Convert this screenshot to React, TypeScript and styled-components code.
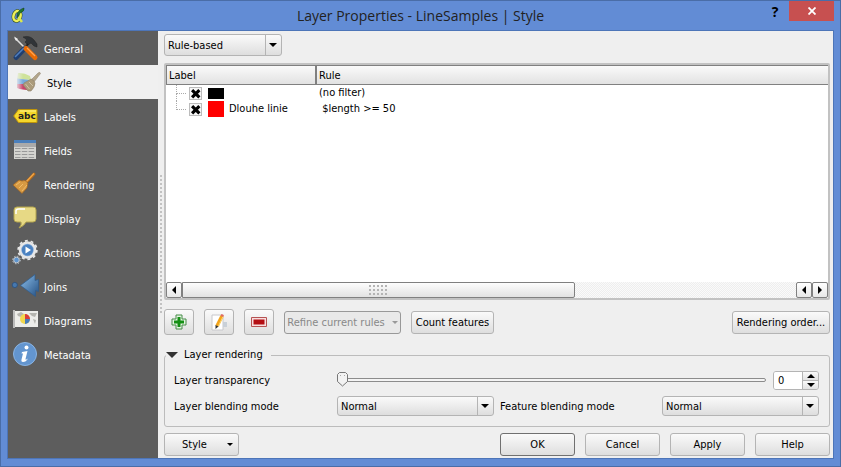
import React, { useState } from "react";
import styled, { createGlobalStyle, css } from "styled-components";

const svgUrl = (body: string, w: number, h: number) =>
  `url("data:image/svg+xml,${encodeURIComponent(
    `<svg xmlns='http://www.w3.org/2000/svg' width='${w}' height='${h}' viewBox='0 0 ${w} ${h}'>${body}</svg>`
  )}")`;

const arrowDown = svgUrl("<path d='M0 0H8L4 4Z' fill='#000'/>", 8, 4);
const thumbShape = svgUrl(
  "<path d='M2.5 .5H8.5L10.5 2.5V9.5L5.5 14L.5 9.5V2.5Z' fill='#f2f2f2' stroke='#777'/><path d='M3 3.5H4M7 3.5H8' stroke='#aaa'/>",
  11,
  15
);
const crossMark = svgUrl("<path d='M2.5 2.5L9.5 9.5M9.5 2.5L2.5 9.5' stroke='#000' stroke-width='3'/>", 12, 12);
const dotPattern = svgUrl("<path d='M0 0H2V2H0Z' fill='#c2c2c2'/>", 3, 4);
const gripPattern = svgUrl("<path d='M0 0H2V2H0Z' fill='#b4b4b4'/>", 4, 4);

const Global = createGlobalStyle`
  * { box-sizing: border-box; }
  body { margin: 0; background: #628cd5; }
  body, button, input, select { font-family: "DejaVu Sans Condensed", "DejaVu Sans", sans-serif; font-size: 11px; color: #000; }
  button, input, select { margin: 0; }
`;

const Window = styled.div`
  display: flex;
  flex-direction: column;
  min-height: 100vh;
  padding: 0 6px 7px;
  background: #628cd5;
  border: 1px solid #4a6da7;
`;

const TitleBar = styled.header`
  display: grid;
  grid-template-columns: 80px 1fr 80px;
  height: 29px;
  flex: none;
`;

const AppIcon = styled.div`
  padding: 6px 0 0 4px;
`;

const Title = styled.h1`
  margin: 0;
  text-align: center;
  color: #222;
  font: 14px/30px "Open Sans", sans-serif;
`;

const WindowControls = styled.div`
  display: flex;
  justify-content: flex-end;
`;

const HelpButton = styled.button`
  width: 28px;
  height: 20px;
  padding: 0;
  border: 0;
  background: none;
  font: bold 14px "Open Sans", sans-serif;
`;

const CloseButton = styled.button`
  width: 45px;
  height: 20px;
  display: grid;
  place-items: center;
  padding: 0;
  border: 0;
  background: #c75050;
`;

const Body = styled.div`
  display: flex;
  flex: 1;
  border: 1px solid #4d75b8;
  background: #efefef;
`;

const Sidebar = styled.nav`
  width: 150px;
  flex: none;
  background: #5d5d5d;
`;

const NavItem = styled.button<{ $active?: boolean }>`
  display: flex;
  align-items: center;
  gap: 6px;
  width: 100%;
  height: 34px;
  border: 0;
  padding: 0 0 0 ${(p) => (p.$active ? 7 : 4)}px;
  background: ${(p) => (p.$active ? "#f0f0f0" : "transparent")};
  color: ${(p) => (p.$active ? "#000" : "#fff")};
  text-align: left;
  svg { flex: none; }
  span { padding-top: 2px; }
`;

const Splitter = styled.div`
  width: 6px;
  flex: none;
  display: flex;
  align-items: center;
  padding-left: 2px;
  &::before {
    content: "";
    width: 3px;
    height: 140px;
    background: ${dotPattern};
  }
`;

const Main = styled.main`
  flex: 1;
  min-width: 0;
  display: flex;
  flex-direction: column;
  padding: 3px 3px 2px 0;
`;

const raised = css`
  border: 1px solid #b4b4b4;
  border-radius: 3px;
  background-color: #eee;
  background-image: linear-gradient(#fafafa, #dedede);
`;

const Select = styled.select<{ $width?: number }>`
  ${raised}
  appearance: none;
  width: ${(p) => (p.$width ? `${p.$width}px` : "100%")};
  height: ${(p) => (p.$width ? 22 : 20)}px;
  padding: 0 18px 0 3px;
  background-image: ${arrowDown}, linear-gradient(#b4b4b4, #b4b4b4), linear-gradient(#fafafa, #dedede);
  background-repeat: no-repeat;
  background-position: right 4px center, right 15px top, 0 0;
  background-size: 8px 4px, 1px 100%, 100% 100%;
`;

const Tree = styled.section`
  flex: 1;
  display: flex;
  flex-direction: column;
  margin-top: 7px;
  border: 2px solid #c2c2c2;
  border-radius: 2px;
  background: #fff;
`;

const Table = styled.table`
  width: 100%;
  border-collapse: separate;
  border-spacing: 0;
  table-layout: fixed;
  th {
    height: 20px;
    padding: 0 2px;
    text-align: left;
    font-weight: normal;
    border: solid #808080;
    border-width: 1px 0 1px 1px;
    background: linear-gradient(#fafafa, #e2e2e2);
  }
  th:first-child { width: 150px; border-right-width: 1px; }
  td { height: 16px; padding: 0 0 0 3px; white-space: pre; line-height: 16px; }
  td:first-child { padding: 0; }
`;

const RuleCell = styled.div`
  display: flex;
  align-items: center;
  height: 16px;
  padding-left: 10px;
`;

const Branch = styled.span<{ $last?: boolean }>`
  display: flex;
  flex-direction: column;
  width: 10px;
  height: 16px;
  margin-right: 3px;
  &::before {
    content: "";
    height: 8px;
    border: dotted #aaa;
    border-width: 0 0 1px 1px;
  }
  &::after {
    content: "";
    height: 8px;
    border-left: ${(p) => (p.$last ? 0 : 1)}px dotted #aaa;
  }
`;

const CheckBox = styled.input`
  appearance: none;
  width: 13px;
  height: 13px;
  border: 1px solid #bbb;
  background: #f6f6f6;
  &:checked { background: #f6f6f6 ${crossMark} center no-repeat; }
`;

const Swatch = styled.span<{ $color: string; $height: number }>`
  width: 16px;
  height: ${(p) => p.$height}px;
  margin: 0 5px 0 6px;
  background: ${(p) => p.$color};
`;

const ScrollBar = styled.div`
  display: flex;
  height: 16px;
  margin-top: auto;
  background: repeating-conic-gradient(#eee 0 25%, #fafafa 0 50%) 0 0 / 2px 2px;
`;

const ScrollArrow = styled.button`
  width: 16px;
  flex: none;
  display: grid;
  place-items: center;
  padding: 0;
  border: 1px solid #808080;
  border-radius: 2px;
  background: linear-gradient(#fff, #e8e8e8);
`;

const ScrollTrack = styled.div`
  flex: 1;
`;

const ScrollThumb = styled.div`
  display: grid;
  place-items: center;
  width: 64%;
  height: 16px;
  border: 1px solid #808080;
  border-radius: 0 2px 2px 0;
  background: linear-gradient(#fdfdfd, #e2e2e2);
  &::before {
    content: "";
    width: 18px;
    height: 10px;
    background: ${gripPattern};
  }
`;

const RuleTools = styled.div`
  display: flex;
  align-items: center;
  gap: 10px;
  height: 26px;
  margin-top: 9px;
`;

const Button = styled.button<{ $width: number; $primary?: boolean; $pushed?: boolean }>`
  ${raised}
  width: ${(p) => p.$width}px;
  height: 23px;
  padding: 0;
  white-space: nowrap;
  ${(p) => p.$primary && "border-color: #707070;"}
  ${(p) => p.$pushed && "margin-left: auto;"}
`;

const IconButton = styled(Button)`
  display: grid;
  place-items: center;
  height: 26px;
`;

const MenuButton = styled(Button)<{ $gap: number }>`
  display: flex;
  align-items: center;
  justify-content: center;
  gap: ${(p) => p.$gap}px;
  &:disabled { color: #888; border-color: #999; background: #e9e9e9; }
`;

const Group = styled.fieldset`
  min-width: 0;
  margin: 13px 0 6px;
  padding: 8px 10px 10px 9px;
  border: 1px solid #bcbcbc;
  border-radius: 3px;
`;

const Legend = styled.legend`
  display: flex;
  align-items: center;
  gap: 6px;
  margin-left: -8px;
  padding: 0 8px 0 0;
  line-height: 14px;
`;

const Form = styled.div`
  display: grid;
  grid-template-columns: 163px 1fr 168px 1fr;
  grid-template-rows: 20px 20px;
  row-gap: 6px;
  align-items: center;
`;

const Label = styled.label<{ $inset?: boolean }>`
  padding-left: ${(p) => (p.$inset ? 6 : 0)}px;
`;

const SliderRow = styled.div`
  grid-column: 2 / -1;
  display: flex;
  align-items: center;
  gap: 7px;
`;

const Slider = styled.input`
  appearance: none;
  flex: 1;
  min-width: 0;
  height: 15px;
  background: none;
  &::-webkit-slider-runnable-track {
    height: 4px;
    border: 1px solid #8c8c8c;
    border-radius: 2px;
    background: #f4f4f4;
  }
  &::-webkit-slider-thumb {
    appearance: none;
    width: 11px;
    height: 15px;
    margin: -7px 0 0 -1px;
    background: ${thumbShape};
  }
`;

const Spin = styled.div`
  display: flex;
  width: 46px;
  height: 19px;
  overflow: hidden;
  border: 1px solid #b4b4b4;
  border-radius: 3px;
  input {
    width: 28px;
    padding: 0 4px;
    border: 0;
    background: #fff;
  }
`;

const SpinArrows = styled.div`
  flex: 1;
  display: grid;
  border-left: 1px solid #b4b4b4;
  button {
    display: grid;
    place-items: center;
    padding: 0;
    border: 0;
    background: linear-gradient(#fafafa, #e2e2e2);
  }
  button + button { border-top: 1px solid #b4b4b4; }
`;

const DialogButtons = styled.footer`
  display: flex;
  gap: 10px;
  ${MenuButton} { margin-right: auto; padding-left: 12px; }
`;

const Triangle = ({ dir, w = 8, fill = "#000" }: { dir: "up" | "down" | "left" | "right"; w?: number; fill?: string }) => {
  const d = { up: "M0 4H8L4 0Z", down: "M0 0H8L4 4Z", left: "M4 0V8L0 4Z", right: "M0 0V8L4 4Z" }[dir];
  const flat = dir === "up" || dir === "down";
  return (
    <svg width={flat ? w : w / 2} height={flat ? w / 2 : w} viewBox={flat ? "0 0 8 4" : "0 0 4 8"} aria-hidden>
      <path d={d} fill={fill} />
    </svg>
  );
};

const icons: Record<string, React.ReactNode> = {
  General: (
    <>
      <path d="M2 2L13 13" stroke="#ddd" strokeWidth="1.6" />
      <path d="M1 .5L5 3L3 5Z" fill="#eee" />
      <path d="M10 1Q17-1 21 4L24 8V11L21 10L18 7L15 9L12 6L14 4Q12 2 10 1Z" fill="#303438" stroke="#222" strokeWidth=".5" />
      <path d="M15 8L11 13" stroke="#222" strokeWidth="2" />
      <path d="M11 13L3 21.500" stroke="#203f70" strokeWidth="5" strokeLinecap="round" />
      <path d="M10.500 12.500L2.500 20.500" stroke="#517fbd" strokeWidth="1.600" strokeLinecap="round" />
      <path d="M13 12.500L22 21.500" stroke="#e76b05" strokeWidth="5" strokeLinecap="round" />
      <path d="M14 12L22 20" stroke="#ffa34f" strokeWidth="1.300" />
    </>
  ),
  Style: (
    <>
      <defs>
        <linearGradient id="fade"><stop stopColor="#f0f0f0" stopOpacity=".9" /><stop offset=".5" stopColor="#f0f0f0" stopOpacity="0" /></linearGradient>
      </defs>
      <path d="M2 3Q8 2.500 14 6L15 10L1 9Z" fill="#cfe39a" />
      <path d="M1 8.500L14 10L11 15L1 14Z" fill="#77a9dc" />
      <path d="M1 14L10 14L14 20Q6 20 1 18Z" fill="#c9446d" />
      <path d="M0 1H14V21H0Z" fill="url(#fade)" />
      <path d="M22 3Q24 1.500 24.500 3.500L18 12L15.500 9.500Z" fill="#b2a58b" stroke="#8d806b" strokeWidth=".5" />
      <path d="M8 13Q12 11 15 9Q18 10 19 13Q19 17 15 21H12L7 15Z" fill="#ab9b7b" stroke="#8d806b" strokeWidth=".6" />
      <path d="M9.500 14L13.500 19M13 12L17 16" stroke="#cec2a8" />
    </>
  ),
  Labels: (
    <>
      <path d="M.7 12L5.500 5.500H24V18.500H5.500Z" fill="#f5d72c" stroke="#bf950a" />
      <path d="M7 7H23" stroke="#fff38a" />
      <text x="5" y="15" fontFamily="DejaVu Sans" fontSize="9" fontWeight="bold" fill="#222">abc</text>
    </>
  ),
  Fields: (
    <>
      <path d="M1 2H23V21H1Z" fill="#d4d4d0" />
      <path d="M1 2H23V5H1Z" fill="#4b80bd" />
      <path d="M1 5H23V9H1Z" fill="#aaa" />
      <path d="M2 10.500H22M2 13.500H22M2 16.500H22M2 19.500H22" stroke="#999" strokeDasharray="5.500 1.300" />
    </>
  ),
  Rendering: (
    <>
      <path d="M21 2L13.500 10" stroke="#b86b17" strokeWidth="2.800" strokeLinecap="round" />
      <path d="M21 1.500L13 10" stroke="#eea64b" strokeWidth="1.400" />
      <path d="M6 8L9 9Q12 7 15 11L14 16L9 21.500L0 13Z" fill="#d79a43" stroke="#9c601f" strokeWidth=".7" />
      <path d="M3 13L7 10M6 16L10 12M9 19L14 13" stroke="#f0bb69" />
    </>
  ),
  Display: (
    <>
      <path d="M4 1H20Q23 1 23 4V13Q23 16 20 16H13Q11 20 6 22Q9 19 8 16H4Q1 16 1 13V4Q1 1 4 1Z" fill="#e7d985" stroke="#b4a54f" />
      <path d="M3 8V5Q3 3 6 3H12" fill="none" stroke="#fff" strokeWidth="1.500" />
    </>
  ),
  Actions: (
    <>
      <circle cx="14.500" cy="10" r="7.500" fill="#82a9d8" stroke="#e7e7e7" strokeWidth="2.600" />
      <circle cx="14.500" cy="10" r="9.300" fill="none" stroke="#e7e7e7" strokeWidth="1.800" strokeDasharray="2.900 2.943" />
      <circle cx="14.500" cy="10" r="5.600" fill="#4b82c1" />
      <path d="M12.500 6.500L18 10L12.500 13.500Z" fill="#fff" />
      <circle cx="3.500" cy="20" r="2.800" fill="#5e95cf" stroke="#c2cbd4" strokeWidth="1" />
      <circle cx="3.500" cy="20" r="3.800" fill="none" stroke="#c2cbd4" strokeDasharray="1.500 1.480" />
    </>
  ),
  Joins: (
    <>
      <defs><linearGradient id="join" y2="1"><stop stopColor="#8fc1ec" /><stop offset="1" stopColor="#245083" /></linearGradient></defs>
      <circle cx="1.800" cy="11" r="2.600" fill="#4778ad" stroke="#274f80" strokeWidth=".8" />
      <path d="M7.500 11.500L22 .5V6.500L25.500 5.500V17.500L22.500 16.500V22.500Z" fill="url(#join)" stroke="#2c5b8f" strokeWidth=".7" />
    </>
  ),
  Diagrams: (
    <>
      <path d="M1 3H25V19H1Z" fill="#ededea" />
      <path d="M1 2V20" stroke="#bbb" strokeWidth="2" />
      <path d="M4 6L8 4L11 6L8 9L5 8ZM16 5L24 5L22 9L19 8ZM20 11L23 12L22 16Z" fill="#b5b5b0" />
      <circle cx="12" cy="11" r="5" fill="#f3d84c" />
      <path d="M12 11V6A5 5 0 0 1 17 11Z" fill="#d83c3c" />
      <path d="M12 11H17A5 5 0 0 1 12 16Z" fill="#477cba" />
    </>
  ),
  Metadata: (
    <>
      <circle cx="12" cy="12" r="11.500" fill="#6395cf" stroke="#8ab4e3" />
      <circle cx="13.500" cy="5.500" r="2" fill="#fff" />
      <path d="M9 10L14.500 9L12.500 17Q12.500 18.500 15 16.500Q13 20 10 20Q8 20 8.500 17.500L10 11.500H8.500Z" fill="#fff" />
    </>
  ),
};

const pages = ["General", "Style", "Labels", "Fields", "Rendering", "Display", "Actions", "Joins", "Diagrams", "Metadata"];

export default function App() {
  const [page, setPage] = useState("Style");
  const [transparency, setTransparency] = useState(0);
  const change = (n: number) => setTransparency(Math.max(0, Math.min(100, n || 0)));

  return (
    <>
      <Global />
      <Window>
        <TitleBar>
          <AppIcon>
            <svg width="16" height="18" viewBox="0 0 16 18" aria-hidden>
              <ellipse cx="6" cy="9" rx="3.500" ry="5" fill="none" stroke="#304b0d" strokeWidth="3.600" transform="rotate(15 6 9)" />
              <ellipse cx="6" cy="9" rx="3.500" ry="5" fill="none" stroke="#edf05c" strokeWidth="2.600" transform="rotate(15 6 9)" />
              <path d="M7 10L11 15" stroke="#dce94b" strokeWidth="2.500" />
              <path d="M6 8Q7 3 13 1Q14 4 9 6L6 11Z" fill="#1f7a31" stroke="#153d18" strokeWidth=".6" />
            </svg>
          </AppIcon>
          <Title>Layer Properties - LineSamples | Style</Title>
          <WindowControls>
            <HelpButton aria-label="Help">?</HelpButton>
            <CloseButton aria-label="Close">
              <svg width="8" height="8" viewBox="0 0 8 8"><path d="M.5 .5L7.500 7.500M7.500 .5L.5 7.500" stroke="#fff" strokeWidth="1.800" /></svg>
            </CloseButton>
          </WindowControls>
        </TitleBar>
        <Body>
          <Sidebar>
            {pages.map((name) => (
              <NavItem key={name} $active={page === name} onClick={() => setPage(name)}>
                <svg width="26" height="24" viewBox="-1 0 26 24" overflow="visible" aria-hidden>{icons[name]}</svg>
                <span>{name}</span>
              </NavItem>
            ))}
          </Sidebar>
          <Splitter />
          <Main>
            <Select $width={118} aria-label="Renderer"><option>Rule-based</option></Select>
            <Tree>
              <Table>
                <thead><tr><th>Label</th><th>Rule</th></tr></thead>
                <tbody>
                  <tr>
                    <td><RuleCell><Branch /><CheckBox type="checkbox" defaultChecked aria-label="Unlabelled rule" /><Swatch $color="#000" $height={11} /></RuleCell></td>
                    <td>(no filter)</td>
                  </tr>
                  <tr>
                    <td><RuleCell><Branch $last /><CheckBox id="rule-long" type="checkbox" defaultChecked /><Swatch $color="#f00" $height={16} /><label htmlFor="rule-long">Dlouhe linie</label></RuleCell></td>
                    <td> $length &gt;= 50</td>
                  </tr>
                </tbody>
              </Table>
              <ScrollBar>
                <ScrollArrow aria-label="Scroll left"><Triangle dir="left" /></ScrollArrow>
                <ScrollTrack><ScrollThumb /></ScrollTrack>
                <ScrollArrow aria-label="Scroll left"><Triangle dir="left" /></ScrollArrow>
                <ScrollArrow aria-label="Scroll right"><Triangle dir="right" /></ScrollArrow>
              </ScrollBar>
            </Tree>
            <RuleTools>
              <IconButton $width={30} aria-label="Add rule">
                <svg width="16" height="16" viewBox="0 0 16 16">
                  <path d="M5 1H11V5H15V11H11V15H5V11H1V5H5Z" fill="#e5f4e2" stroke="#468c48" />
                  <path d="M6.500 3H9.500V6.500H13V9.500H9.500V13H6.500V9.500H3V6.500H6.500Z" fill="#149014" />
                </svg>
              </IconButton>
              <IconButton $width={30} aria-label="Edit rule">
                <svg width="17" height="17" viewBox="0 0 17 17">
                  <path d="M1 1H12V16H1Z" fill="#fff" stroke="#c8c8cc" />
                  <path d="M12 8H16V13H12Z" fill="#c9d0d8" />
                  <path d="M11 2L6 12" stroke="#f3a41c" strokeWidth="3.500" />
                  <path d="M12 2.500L7.500 12" stroke="#ffd970" />
                  <path d="M4.500 11L7.500 12.500L4.500 15Z" fill="#333" />
                  <path d="M10 1L12.500 2" stroke="#e26a61" strokeWidth="2" />
                </svg>
              </IconButton>
              <IconButton $width={30} aria-label="Remove rule">
                <svg width="16" height="10" viewBox="0 0 16 10">
                  <path d="M.5 .5H15.500V9.500H.5Z" fill="#f8dede" stroke="#b65353" />
                  <path d="M2.500 2.500H13.500V7.500H2.500Z" fill="#b40d12" />
                </svg>
              </IconButton>
              <MenuButton $width={117} $gap={7} disabled>Refine current rules<Triangle dir="down" w={6} fill="#999" /></MenuButton>
              <Button $width={83}>Count features</Button>
              <Button $width={98} $pushed>Rendering order...</Button>
            </RuleTools>
            <Group>
              <Legend><Triangle dir="down" w={12} fill="#333" />Layer rendering</Legend>
              <Form>
                <Label htmlFor="transparency">Layer transparency</Label>
                <SliderRow>
                  <Slider id="transparency" type="range" value={transparency} onChange={(e) => change(+e.target.value)} />
                  <Spin>
                    <input aria-label="Transparency value" value={transparency} onChange={(e) => change(+e.target.value)} />
                    <SpinArrows>
                      <button aria-label="Increase" onClick={() => change(transparency + 1)}><Triangle dir="up" /></button>
                      <button aria-label="Decrease" onClick={() => change(transparency - 1)}><Triangle dir="down" /></button>
                    </SpinArrows>
                  </Spin>
                </SliderRow>
                <Label htmlFor="layer-blend">Layer blending mode</Label>
                <Select id="layer-blend"><option>Normal</option></Select>
                <Label $inset htmlFor="feature-blend">Feature blending mode</Label>
                <Select id="feature-blend"><option>Normal</option></Select>
              </Form>
            </Group>
            <DialogButtons>
              <MenuButton $width={75} $gap={20}>Style<Triangle dir="down" w={6} /></MenuButton>
              <Button $width={75} $primary>OK</Button>
              <Button $width={75}>Cancel</Button>
              <Button $width={75}>Apply</Button>
              <Button $width={75}>Help</Button>
            </DialogButtons>
          </Main>
        </Body>
      </Window>
    </>
  );
}
